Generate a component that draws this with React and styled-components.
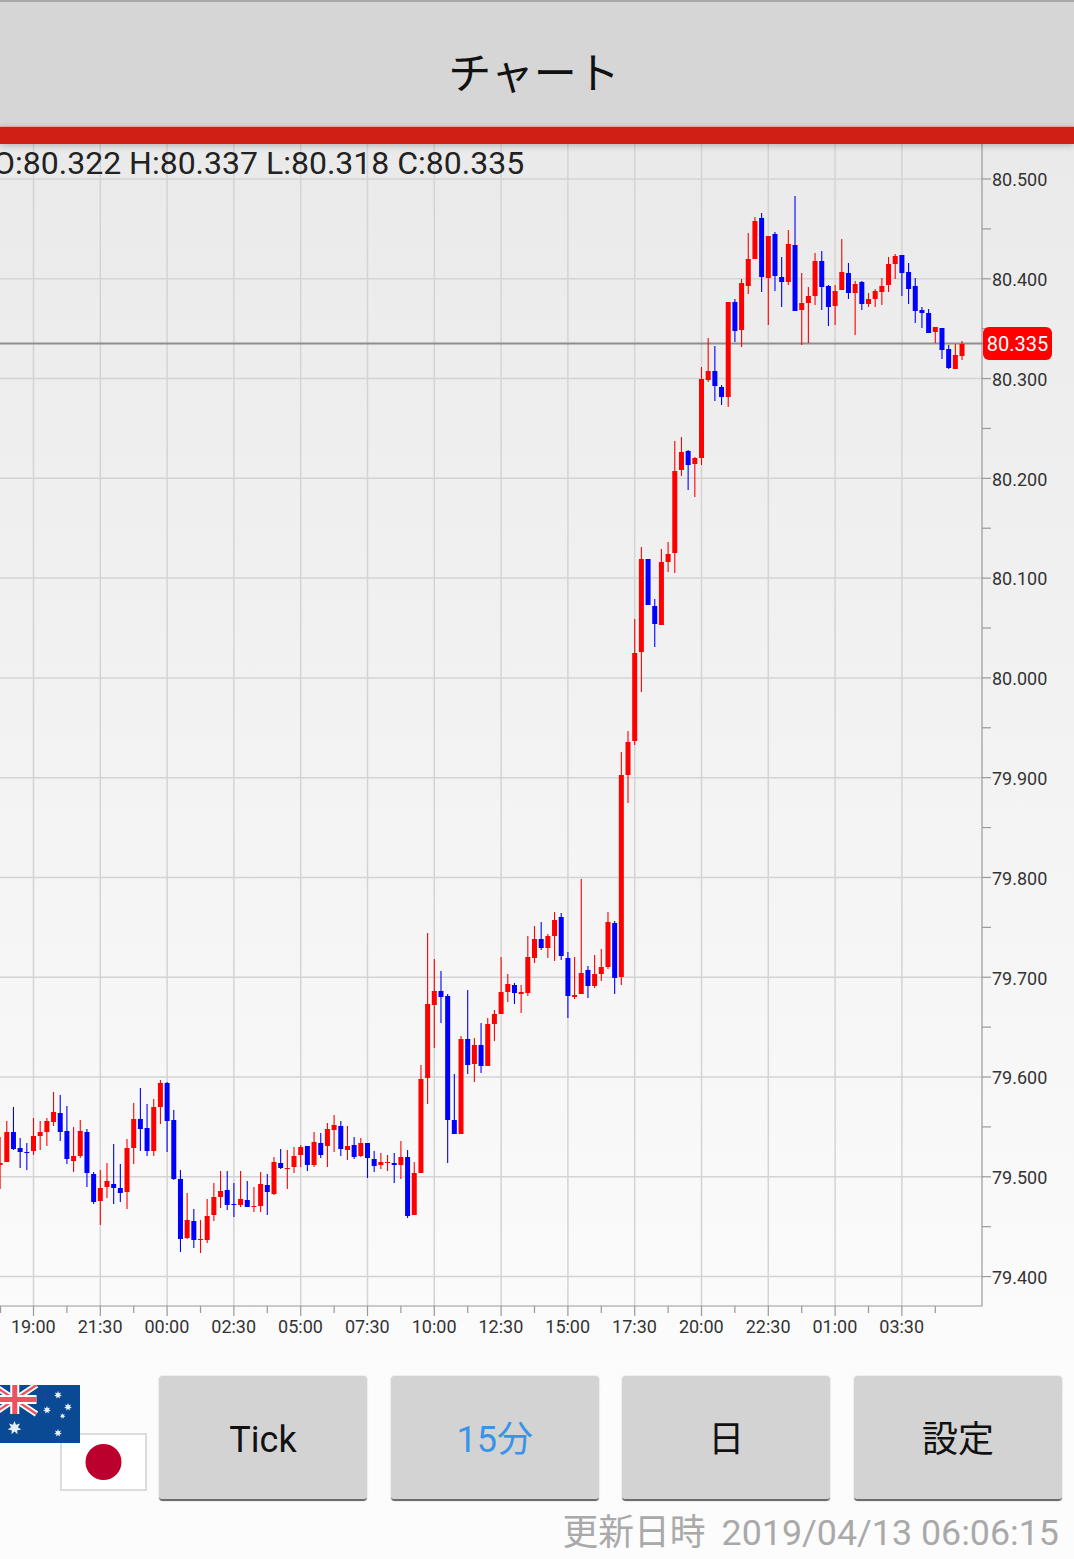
import React from "react"
import styled, { createGlobalStyle } from "styled-components"

const candleRows = `
R 1137 1163 1165 1189
R 1121 1132 1162 1162
B 1107 1132 1149 1150
B 1138 1148 1152 1168
B 1143 1152 1153 1170
R 1118 1136 1151 1155
R 1121 1132 1136 1150
R 1118 1121 1132 1146
R 1092 1112 1122 1126
B 1095 1113 1132 1141
B 1106 1131 1159 1164
R 1127 1156 1161 1172
R 1120 1131 1156 1158
B 1129 1132 1173 1187
B 1172 1174 1202 1204
R 1170 1188 1201 1225
R 1163 1181 1187 1198
B 1144 1184 1188 1204
B 1164 1188 1193 1202
R 1139 1148 1192 1209
R 1103 1119 1148 1164
B 1088 1119 1129 1151
B 1104 1128 1151 1156
R 1099 1107 1151 1156
R 1080 1083 1107 1124
B 1082 1083 1121 1152
B 1110 1120 1179 1180
B 1170 1179 1239 1252
R 1193 1220 1238 1239
B 1209 1221 1240 1248
R 1220 1239 1240 1253
R 1199 1216 1240 1243
R 1183 1197 1215 1221
R 1171 1191 1197 1208
B 1171 1190 1205 1210
B 1183 1204 1205 1217
R 1171 1199 1205 1207
B 1181 1200 1207 1207
R 1187 1206 1207 1212
R 1172 1184 1206 1212
B 1174 1185 1192 1215
R 1157 1162 1194 1195
B 1149 1163 1168 1169
R 1150 1168 1169 1189
R 1147 1156 1167 1173
R 1145 1147 1155 1167
B 1146 1146 1165 1171
R 1132 1142 1165 1167
B 1133 1143 1155 1158
R 1123 1129 1146 1167
R 1115 1125 1130 1152
B 1121 1126 1149 1156
R 1126 1146 1150 1160
B 1137 1145 1157 1159
R 1138 1143 1156 1157
B 1143 1143 1158 1178
B 1151 1159 1166 1172
R 1153 1162 1165 1169
R 1155 1162 1163 1171
B 1153 1163 1165 1183
R 1141 1157 1165 1179
B 1150 1157 1216 1218
R 1162 1173 1215 1215
R 1065 1079 1173 1173
R 933 1004 1078 1104
R 959 991 1005 1048
B 971 991 997 1023
B 994 996 1120 1163
B 1074 1120 1134 1134
R 1036 1039 1134 1134
B 990 1039 1065 1074
R 1038 1045 1064 1082
B 1023 1045 1066 1073
R 1018 1024 1066 1066
R 1010 1014 1024 1041
R 957 992 1014 1014
R 974 984 992 1002
B 983 985 993 1004
R 985 992 994 1013
R 936 957 993 996
R 926 939 958 963
B 922 939 948 950
R 934 936 948 958
R 912 920 936 961
B 913 917 956 960
B 952 958 996 1018
R 957 995 997 999
R 879 973 994 994
B 966 970 986 998
R 955 974 986 988
R 949 967 974 981
R 912 922 967 969
B 921 923 978 994
R 752 775 977 985
R 731 742 775 803
R 619 653 741 745
R 547 559 652 692
B 559 559 605 605
B 599 606 624 647
R 549 562 625 625
R 542 554 562 572
R 441 471 553 573
R 437 452 470 476
B 450 451 465 490
R 457 458 464 497
R 367 379 458 465
R 338 371 380 382
B 346 371 386 401
B 385 387 397 405
R 302 302 397 407
B 299 302 331 342
R 279 283 330 347
R 233 259 286 294
R 217 221 259 259
B 213 218 277 292
R 236 236 278 325
B 232 234 276 291
B 257 277 282 307
R 230 244 282 285
B 196 245 311 311
R 273 303 310 345
R 287 296 303 343
R 253 261 296 305
B 251 261 287 310
B 285 286 307 326
R 285 291 306 325
R 239 272 290 290
B 263 273 293 299
R 281 284 293 335
B 281 282 304 310
R 293 299 304 307
R 289 291 299 307
R 278 286 292 305
R 257 264 285 292
R 254 256 264 279
B 255 255 273 296
B 263 272 289 304
B 278 286 311 323
B 307 310 313 328
B 309 313 333 333
R 327 327 332 343
B 328 328 350 359
B 345 349 368 369
R 344 355 369 369
R 341 344 356 360
`

const candles = candleRows.trim().split("\n").map((row, index) => {
    const [side, wickTop, bodyTop, bodyBottom, wickBottom] = row.split(" ")
    return {
        x: 33.5 + (index - 5) * 6.68,
        color: side === "R" ? "#ff0000" : "#0000ff",
        wickTop: +wickTop,
        bodyTop: +bodyTop,
        bodyBottom: +bodyBottom,
        wickBottom: +wickBottom,
    }
})

const priceLabels = ["80.500", "80.400", "80.300", "80.200", "80.100", "80.000", "79.900", "79.800", "79.700", "79.600", "79.500", "79.400"]
const timeLabels = ["19:00", "21:30", "00:00", "02:30", "05:00", "07:30", "10:00", "12:30", "15:00", "17:30", "20:00", "22:30", "01:00", "03:30"]

const priceY = (index) => 179 + index * 99.78
const timeX = (index) => 33.5 + index * 66.8

function starPoints(cx, cy, r) {
    const points = []
    for (let i = 0; i < 14; i++) {
        const angle = -Math.PI / 2 + i * Math.PI / 7
        const radius = i % 2 ? r * 0.5 : r
        points.push((cx + radius * Math.cos(angle)).toFixed(1) + "," + (cy + radius * Math.sin(angle)).toFixed(1))
    }
    return points.join(" ")
}

function Grid() {
    return (
        <g>
            {priceLabels.map((label, i) => (
                <g key = {label}>
                    <GridLine x1 = "0" x2 = "982" y1 = {priceY(i)} y2 = {priceY(i)}/>
                    <AxisLine x1 = "982" x2 = "991" y1 = {priceY(i)} y2 = {priceY(i)}/>
                    {i < 11 && <AxisLine x1 = "982" x2 = "991" y1 = {priceY(i) + 49.89} y2 = {priceY(i) + 49.89}/>}
                    <AxisLabel x = "992" y = {priceY(i) + 7.3}>{label}</AxisLabel>
                </g>
            ))}
            {timeLabels.map((label, i) => (
                <g key = {label}>
                    <GridLine x1 = {timeX(i)} x2 = {timeX(i)} y1 = "144" y2 = "1306"/>
                    <AxisLine x1 = {timeX(i)} x2 = {timeX(i)} y1 = "1306" y2 = "1316"/>
                    <AxisLine x1 = {timeX(i) + 33.4} x2 = {timeX(i) + 33.4} y1 = "1306" y2 = "1313"/>
                    <TimeLabel x = {timeX(i) - 0.2} y = "1333">{label}</TimeLabel>
                </g>
            ))}
            <AxisLine x1 = "0.5" x2 = "0.5" y1 = "1306" y2 = "1313"/>
            <AxisLine x1 = "0" x2 = "982.5" y1 = "1306" y2 = "1306"/>
            <AxisLine x1 = "982" x2 = "982" y1 = "144" y2 = "1306"/>
        </g>
    )
}

function Candle({x, color, wickTop, bodyTop, bodyBottom, wickBottom}) {
    return (
        <g>
            <line x1 = {x} x2 = {x} y1 = {wickTop} y2 = {wickBottom} stroke = {color} strokeWidth = "1.1"/>
            <rect x = {x - 2.5} y = {bodyTop} width = "5" height = {Math.max(bodyBottom - bodyTop, 1)} fill = {color}/>
        </g>
    )
}

function AustraliaFlag() {
    const stars = [[65, 10, 4], [54, 25, 4], [75, 22, 4], [69.6, 31, 2.8], [65, 48, 4], [21.5, 43, 7]]
    return (
        <FlagOver width = "87" height = "58" viewBox = "0 0 87 58">
            <rect width = "87" height = "58" fill = "#0a4a94"/>
            <path d = "M0 0L43.5 29M43.5 0L0 29" stroke = "#fff" strokeWidth = "6"/>
            <path d = "M0 0L43.5 29M43.5 0L0 29" stroke = "#f0515f" strokeWidth = "2.4"/>
            <path d = "M21.75 0V29M0 14.5H43.5" stroke = "#fff" strokeWidth = "9"/>
            <path d = "M21.75 0V29M0 14.5H43.5" stroke = "#f0515f" strokeWidth = "5"/>
            {stars.map(([cx, cy, r]) => <polygon key = {cx + "-" + cy} points = {starPoints(cx, cy, r)} fill = "#e6eef8"/>)}
        </FlagOver>
    )
}

function JapanFlag() {
    return (
        <FlagUnder width = "87" height = "58" viewBox = "0 0 87 58">
            <rect x = "1" y = "1" width = "85" height = "56" fill = "#fff" stroke = "#dcdcdc" strokeWidth = "2"/>
            <circle cx = "43.5" cy = "29" r = "18" fill = "#bc002d"/>
        </FlagUnder>
    )
}

export default function App() {
    return (
        <>
            <GlobalStyle/>
            <Page>
                <Header>
                    <Title>チャート</Title>
                </Header>
                <RedBar/>
                <ChartBox>
                    <ChartSvg width = "1074" height = "1232" viewBox = "0 144 1074 1232">
                        <Grid/>
                        <PriceLine x1 = "0" x2 = "983" y1 = "343.5" y2 = "343.5"/>
                        {candles.map((value, index) => <Candle key = {index} {...value}/>)}
                    </ChartSvg>
                    <Ohlc>O:80.322 H:80.337 L:80.318 C:80.335</Ohlc>
                    <PriceBadge>80.335</PriceBadge>
                </ChartBox>
                <Toolbar>
                    <Flags>
                        <JapanFlag/>
                        <AustraliaFlag/>
                    </Flags>
                    <Buttons>
                        <Button>Tick</Button>
                        <Button $active>15分</Button>
                        <Button>日</Button>
                        <Button>設定</Button>
                    </Buttons>
                </Toolbar>
                <Updated>
                    <UpdatedLabel>更新日時</UpdatedLabel>
                    <span>2019/04/13 06:06:15</span>
                </Updated>
            </Page>
        </>
    )
}

const GlobalStyle = createGlobalStyle`
    html, body {
        margin: 0;
        padding: 0;
        background: #fdfdfd;
    }
`
const Page = styled.div`
    width: 1074px;
    height: 1559px;
    overflow: hidden;
    font-family: 'Roboto', 'Noto Sans CJK JP', sans-serif;
    background: linear-gradient(#eaeaea 144px, #fcfcfc 1400px);
`
const Header = styled.div`
    height: 125px;
    border-top: 2px solid #a8a8a8;
    background-color: #d6d6d6;
    display: flex;
    justify-content: center;
    align-items: center;
`
const Title = styled.h1`
    margin: 0;
    font-family: 'Noto Sans CJK JP', sans-serif;
    font-size: 43px;
    font-weight: 400;
    color: #111;
    transform: translate(-3px, 5px);
`
const RedBar = styled.div`
    position: relative;
    z-index: 1;
    height: 17px;
    margin-top: -1px;
    border-top: 1px solid #e7a29c;
    background-color: #d01f14;
    box-shadow: 0 2px 6px rgba(0, 0, 0, 0.22);
`
const ChartBox = styled.div`
    position: relative;
    height: 1232px;
`
const ChartSvg = styled.svg`
    display: block;
`
const GridLine = styled.line`
    stroke: #d4d4d4;
    stroke-width: 1.5;
`
const AxisLine = styled.line`
    stroke: #999;
    stroke-width: 1.2;
`
const PriceLine = styled.line`
    stroke: #8e8e8e;
    stroke-width: 2;
`
const AxisLabel = styled.text`
    font-family: 'Roboto', sans-serif;
    font-size: 18px;
    fill: #333;
`
const TimeLabel = styled(AxisLabel)`
    text-anchor: middle;
`
const Ohlc = styled.div`
    position: absolute;
    left: -7px;
    top: 0;
    font-size: 32px;
    line-height: 38px;
    color: #222;
    white-space: nowrap;
`
const PriceBadge = styled.div`
    position: absolute;
    left: 983px;
    top: 183px;
    width: 69px;
    height: 33px;
    border-radius: 6px;
    background-color: #ff0000;
    color: #fff;
    font-size: 20px;
    display: flex;
    justify-content: center;
    align-items: center;
`
const Toolbar = styled.div`
    height: 125px;
    display: flex;
`
const Flags = styled.div`
    position: relative;
    width: 159px;
    flex-shrink: 0;
`
const FlagOver = styled.svg`
    position: absolute;
    left: -7px;
    top: 9px;
`
const FlagUnder = styled.svg`
    position: absolute;
    left: 60px;
    top: 57px;
`
const Buttons = styled.div`
    width: 903px;
    display: grid;
    grid-template-columns: repeat(4, 208px);
    justify-content: space-between;
`
const Button = styled.div`
    border-radius: 4px;
    background-color: #d3d3d3;
    border-bottom: 2px solid #6c6c6c;
    box-shadow: 0 0 2px rgba(0, 0, 0, 0.2);
    color: ${props => props.$active ? "#3b93e8" : "#111"};
    font-size: 36px;
    line-height: 1;
    padding-top: 5px;
    display: flex;
    justify-content: center;
    align-items: center;
`
const Updated = styled.div`
    padding: 11px 15px 0 0;
    display: flex;
    justify-content: flex-end;
    align-items: baseline;
    gap: 16px;
    font-size: 35.8px;
    line-height: 1;
    color: #a9a9a9;
`
const UpdatedLabel = styled.span`
    font-family: 'Noto Sans CJK JP', sans-serif;
`
